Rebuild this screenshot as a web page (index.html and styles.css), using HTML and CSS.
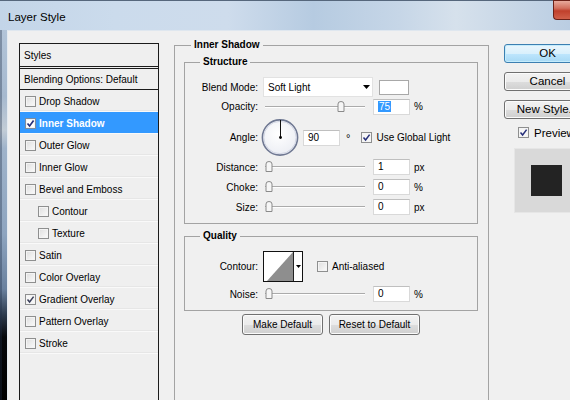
FILE: index.html
```html
<!DOCTYPE html>
<html lang="en">
<head>
<meta charset="utf-8">
<title>Layer Style</title>
<link rel="stylesheet" href="styles.css">
</head>
<body>
<div class="window">
  <div class="titlebar">
    <span class="title">Layer Style</span>
    <span class="close"></span>
  </div>
  <div class="frame">
    <div class="frame-left"></div>
    <div class="client">
      <div class="styles-list">
        <div class="list-head">Styles</div>
        <div class="list-blend">Blending Options: Default</div>
        <div class="item"><span class="cb"></span>Drop Shadow</div>
        <div class="item selected"><span class="cb checked"><svg width="9" height="9" viewBox="0 0 9 9"><path d="M1.5 4.5 L3.6 7 L7.6 1.6" fill="none" stroke="#27307a" stroke-width="1.7"/></svg></span>Inner Shadow</div>
        <div class="item"><span class="cb"></span>Outer Glow</div>
        <div class="item"><span class="cb"></span>Inner Glow</div>
        <div class="item"><span class="cb"></span>Bevel and Emboss</div>
        <div class="item sub"><span class="cb"></span>Contour</div>
        <div class="item sub"><span class="cb"></span>Texture</div>
        <div class="item"><span class="cb"></span>Satin</div>
        <div class="item"><span class="cb"></span>Color Overlay</div>
        <div class="item"><span class="cb checked"><svg width="9" height="9" viewBox="0 0 9 9"><path d="M1.5 4.5 L3.6 7 L7.6 1.6" fill="none" stroke="#3a3f5a" stroke-width="1.5"/></svg></span>Gradient Overlay</div>
        <div class="item"><span class="cb"></span>Pattern Overlay</div>
        <div class="item"><span class="cb"></span>Stroke</div>
      </div>

      <fieldset class="group main-group">
        <legend>Inner Shadow</legend>
        <fieldset class="group sub-group structure">
          <legend>Structure</legend>
          <div class="row r-20">
            <span class="lbl">Blend Mode:</span>
            <div class="select"><span>Soft Light</span><svg class="arrow" width="7" height="4" viewBox="0 0 7 4"><path d="M0 0 H7 L3.5 4 Z" fill="#000"/></svg></div>
            <div class="swatch"></div>
          </div>
          <div class="row r-19">
            <span class="lbl">Opacity:</span>
            <div class="slider"><svg class="thumb" style="left:72px" width="8" height="11" viewBox="0 0 8 11"><path d="M1 3 Q1 0.5 4 0.5 Q7 0.5 7 3 V10.5 H1 Z" fill="#f6f6f6" stroke="#8a8a8a"/></svg></div>
            <div class="field"><span class="hl">75</span></div>
            <span class="unit">%</span>
          </div>
          <div class="row r-angle">
            <span class="lbl">Angle:</span>
            <svg class="dial" width="38" height="39" viewBox="0 0 38 39">
              <defs><radialGradient id="dg" cx="0.45" cy="0.4" r="0.6"><stop offset="0" stop-color="#ffffff"/><stop offset="1" stop-color="#eceef4"/></radialGradient></defs>
              <circle cx="19" cy="19.5" r="17.6" fill="url(#dg)" stroke="#6f7892" stroke-width="1.6"/>
              <circle cx="19" cy="19.5" r="16.2" fill="none" stroke="#c9cede" stroke-width="0.8"/>
              <line x1="19.5" y1="19.5" x2="19.5" y2="2" stroke="#111" stroke-width="1"/>
              <circle cx="19.5" cy="19.5" r="1.4" fill="#000"/>
            </svg>
            <div class="field angle-field">90</div>
            <span class="deg">°</span>
            <span class="cb checked global"><svg width="9" height="9" viewBox="0 0 9 9"><path d="M1.5 4.5 L3.6 7 L7.6 1.6" fill="none" stroke="#27307a" stroke-width="1.5"/></svg></span>
            <span class="cb-text">Use Global Light</span>
          </div>
          <div class="row r-20">
            <span class="lbl">Distance:</span>
            <div class="slider"><svg class="thumb" style="left:0px" width="8" height="11" viewBox="0 0 8 11"><path d="M1 3 Q1 0.5 4 0.5 Q7 0.5 7 3 V10.5 H1 Z" fill="#f6f6f6" stroke="#8a8a8a"/></svg></div>
            <div class="field">1</div>
            <span class="unit">px</span>
          </div>
          <div class="row r-20">
            <span class="lbl">Choke:</span>
            <div class="slider"><svg class="thumb" style="left:0px" width="8" height="11" viewBox="0 0 8 11"><path d="M1 3 Q1 0.5 4 0.5 Q7 0.5 7 3 V10.5 H1 Z" fill="#f6f6f6" stroke="#8a8a8a"/></svg></div>
            <div class="field">0</div>
            <span class="unit">%</span>
          </div>
          <div class="row r-20">
            <span class="lbl">Size:</span>
            <div class="slider"><svg class="thumb" style="left:0px" width="8" height="11" viewBox="0 0 8 11"><path d="M1 3 Q1 0.5 4 0.5 Q7 0.5 7 3 V10.5 H1 Z" fill="#f6f6f6" stroke="#8a8a8a"/></svg></div>
            <div class="field">0</div>
            <span class="unit">px</span>
          </div>
        </fieldset>

        <fieldset class="group sub-group quality">
          <legend>Quality</legend>
          <div class="row r-contour">
            <span class="lbl">Contour:</span>
            <div class="contour">
              <svg class="contour-curve" width="29" height="29" viewBox="0 0 29 29"><rect width="29" height="29" fill="#fff"/><path d="M3 29 L29 0 V29 Z" fill="#8e8e8e"/></svg>
              <div class="contour-drop"><svg width="5" height="3" viewBox="0 0 5 3"><path d="M0 0 H5 L2.5 3 Z" fill="#000"/></svg></div>
            </div>
            <span class="cb aa"></span>
            <span class="cb-text">Anti-aliased</span>
          </div>
          <div class="row r-20 r-noise">
            <span class="lbl">Noise:</span>
            <div class="slider"><svg class="thumb" style="left:0px" width="8" height="11" viewBox="0 0 8 11"><path d="M1 3 Q1 0.5 4 0.5 Q7 0.5 7 3 V10.5 H1 Z" fill="#f6f6f6" stroke="#8a8a8a"/></svg></div>
            <div class="field">0</div>
            <span class="unit">%</span>
          </div>
        </fieldset>

        <div class="defaults">
          <button class="btn small make">Make Default</button>
          <button class="btn small reset">Reset to Default</button>
        </div>
      </fieldset>

      <div class="side">
        <button class="btn default">OK</button>
        <button class="btn">Cancel</button>
        <button class="btn">New Style...</button>
        <div class="preview-row"><span class="cb checked"><svg width="9" height="9" viewBox="0 0 9 9"><path d="M1.5 4.5 L3.6 7 L7.6 1.6" fill="none" stroke="#27307a" stroke-width="1.5"/></svg></span><span class="cb-text">Preview</span></div>
        <div class="preview-box"><div class="preview-swatch"></div></div>
      </div>
    </div>
  </div>
</div>
</body>
</html>
```

FILE: styles.css
```css
* { box-sizing: border-box; }
html, body { margin: 0; padding: 0; }
body {
  width: 570px;
  height: 400px;
  overflow: hidden;
  background: #000;
  font-family: "Liberation Sans", Arial, sans-serif;
  font-size: 10px;
  color: #000;
}
.window {
  width: 570px;
  height: 400px;
  display: flex;
  flex-direction: column;
}
.titlebar {
  height: 30px;
  flex: none;
  display: flex;
  align-items: flex-start;
  border-top: 1px solid #56677c;
  background: linear-gradient(to right, #c3d5e8 0%, #cbdbec 20%, #cedcec 40%, #b6cbe1 55%, #c6d6e7 70%, #d6e1ec 80%, #bacde2 100%);
}
.title {
  font-size: 11.5px;
  line-height: 14px;
  margin: 9px 0 0 8px;
  color: #000;
}
.close {
  margin-left: auto;
  width: 17px;
  height: 20px;
  margin-top: -1px;
  border: 1px solid #6b2118;
  border-right: none;
  border-radius: 0 0 0 4px;
  background: linear-gradient(#e8aa9c 0%, #d2705e 40%, #c0402c 55%, #d0604a 100%);
}
.frame {
  flex: 1;
  display: flex;
  min-height: 0;
}
.frame-left {
  width: 7px;
  flex: none;
  background:
    linear-gradient(to right, rgba(30, 45, 70, 0.35) 0 2px, transparent 2px),
    linear-gradient(to bottom, #b2c4d8 0%, #a6b9cf 18%, #c2ccd6 27%, #9fb3ca 32%, #8ea5c0 55%, #6a819e 70%, #2c3a4c 77%, #06080b 83%, #000 100%);
}
.client {
  flex: 1;
  min-width: 0;
  display: flex;
  align-items: flex-start;
  padding: 8px 0 0 11px;
  background: #f0f0f0;
  border-left: 1px solid #e4ebf2;
  border-top: 1px solid #dfe7ef;
  overflow: hidden;
}

/* Styles list */
.styles-list {
  flex: none;
  width: 140px;
  height: 380px;
  margin-top: 4px;
  border: 1px solid #1b1b1b;
  background: #efefef;
}
.list-head {
  height: 25px;
  padding: 1px 4px 0;
  line-height: 22px;
  border-bottom: 3px double #1b1b1b;
}
.list-blend {
  height: 21px;
  padding: 1px 4px 0;
  line-height: 20px;
  border-bottom: 1px solid #1b1b1b;
}
.item {
  height: 22px;
  display: flex;
  align-items: center;
  padding: 1px 0 0 5px;
  border-bottom: 1px solid #f9f9f9;
  box-shadow: inset 0 -2px 0 -1px #e6e6e6;
}
.item.sub { padding-left: 18px; }
.item.selected {
  background: #3399ff;
  color: #fff;
  font-weight: bold;
  box-shadow: none;
}
.cb {
  flex: none;
  width: 11px;
  height: 11px;
  margin-right: 3px;
  border: 1px solid #8e8f8f;
  background: linear-gradient(135deg, #dedede, #fbfbfb);
  box-shadow: inset 0 0 0 1px #f4f4f4;
  display: flex;
  align-items: center;
  justify-content: center;
}
.cb.checked { background: #f6f6f6; }
.item.selected .cb { background: #fff; border-color: #7c8c9e; }
.cb svg { display: block; }

/* groups */
.group {
  margin: 0;
  min-width: 0;
  border: 1px solid #a3a3a3;
}
.group legend {
  font-weight: bold;
  font-size: 10px;
  line-height: 12px;
  padding: 0 3px;
}
.main-group {
  flex: none;
  width: 315px;
  height: 380px;
  margin-left: 15px;
  padding: 5px 10px 0 9px;
}
.main-group > legend { margin-left: 7px; }
.sub-group {
  width: 294px;
  padding: 9px 0 6px 0;
}
.sub-group > legend { margin-left: 15px; }
.quality { margin-top: 6px; padding-top: 8px; }

.row {
  display: flex;
  align-items: center;
}
.r-20 { height: 20px; }
.r-19 { height: 19px; }
.r-angle { height: 39px; margin-top: 2px; }
.r-contour { height: 32px; align-items: center; }
.r-noise { margin-top: 2px; }
.lbl {
  flex: none;
  width: 73px;
  margin-right: 5px;
  text-align: right;
  white-space: nowrap;
}
.select {
  flex: none;
  width: 110px;
  height: 20px;
  display: flex;
  align-items: center;
  padding: 0 2px 0 4px;
  background: #fff;
  border: 1px solid #e2e2e2;
}
.select .arrow { margin-left: auto; display: block; }
.swatch {
  flex: none;
  width: 30px;
  height: 15px;
  margin-left: 6px;
  background: #fff;
  border: 1px solid #a8a8a8;
}
.slider {
  flex: none;
  position: relative;
  width: 100px;
  height: 2px;
  margin-left: 2px;
  border-top: 1px solid #ababab;
  border-bottom: 1px solid #ffffff;
}
.thumb {
  position: absolute;
  top: -6px;
  display: block;
}
.field {
  flex: none;
  width: 37px;
  height: 16px;
  margin-left: 8px;
  padding-left: 4px;
  line-height: 14px;
  background: #fff;
  border: 1px solid #d9d9d9;
  border-top-color: #bfbfbf;
}
.hl {
  background: #3399ff;
  color: #fff;
  padding: 0 1px;
}
.unit { margin-left: 4px; }
.dial { flex: none; display: block; margin-left: -2px; }
.angle-field { margin-left: 4px; }
.deg { margin-left: 6px; font-size: 11px; }
.cb.global { margin-left: 11px; }
.cb-text { margin-left: 1px; white-space: nowrap; }
.contour {
  flex: none;
  display: flex;
  width: 40px;
  height: 31px;
  border: 1px solid #111;
  background: #fff;
}
.contour-curve { display: block; }
.contour-drop {
  flex: 1;
  display: flex;
  align-items: center;
  justify-content: center;
  border-left: 1px solid #222;
  background: #fff;
}
.contour-drop svg { display: block; }
.cb.aa { margin-left: 14px; }

/* buttons */
.btn {
  display: block;
  font-family: "Liberation Sans", Arial, sans-serif;
  font-size: 11.5px;
  color: #000;
  text-align: center;
  padding: 0;
  height: 19px;
  line-height: 17px;
  border: 1px solid #707070;
  border-radius: 3px;
  background: linear-gradient(#f2f2f2 0%, #ebebeb 50%, #dddddd 51%, #cfcfcf 100%);
  box-shadow: inset 0 0 0 1px #fbfbfb;
  white-space: nowrap;
  overflow: hidden;
}
.btn.default {
  border-color: #3c7fb1;
  background: linear-gradient(#eaf6fd 0%, #d9f0fc 50%, #bee6fd 51%, #a7d9f5 100%);
  box-shadow: inset 0 0 0 1px #c4ecfc;
}
.defaults {
  display: flex;
  justify-content: center;
  gap: 6px;
  margin-top: 3px;
}
.btn.small {
  font-size: 10px;
  height: 21px;
  line-height: 19px;
}
.btn.make { width: 81px; }
.btn.reset { width: 91px; }

.side {
  flex: none;
  width: 87px;
  margin-left: 15px;
  margin-top: 5px;
  display: flex;
  flex-direction: column;
  gap: 9px;
}
.side .btn { width: 87px; }
.preview-row {
  display: flex;
  align-items: center;
  height: 13px;
  margin-top: -2px;
  margin-left: 14px;
  font-size: 11.5px;
}
.preview-row .cb { margin-right: 4px; }
.preview-box {
  width: 65px;
  height: 65px;
  margin-left: 10px;
  background: #d9d9d9;
  border: 1px solid #e6e6e6;
  display: flex;
  align-items: center;
  justify-content: center;
}
.preview-swatch {
  width: 31px;
  height: 31px;
  background: #232323;
}
```
